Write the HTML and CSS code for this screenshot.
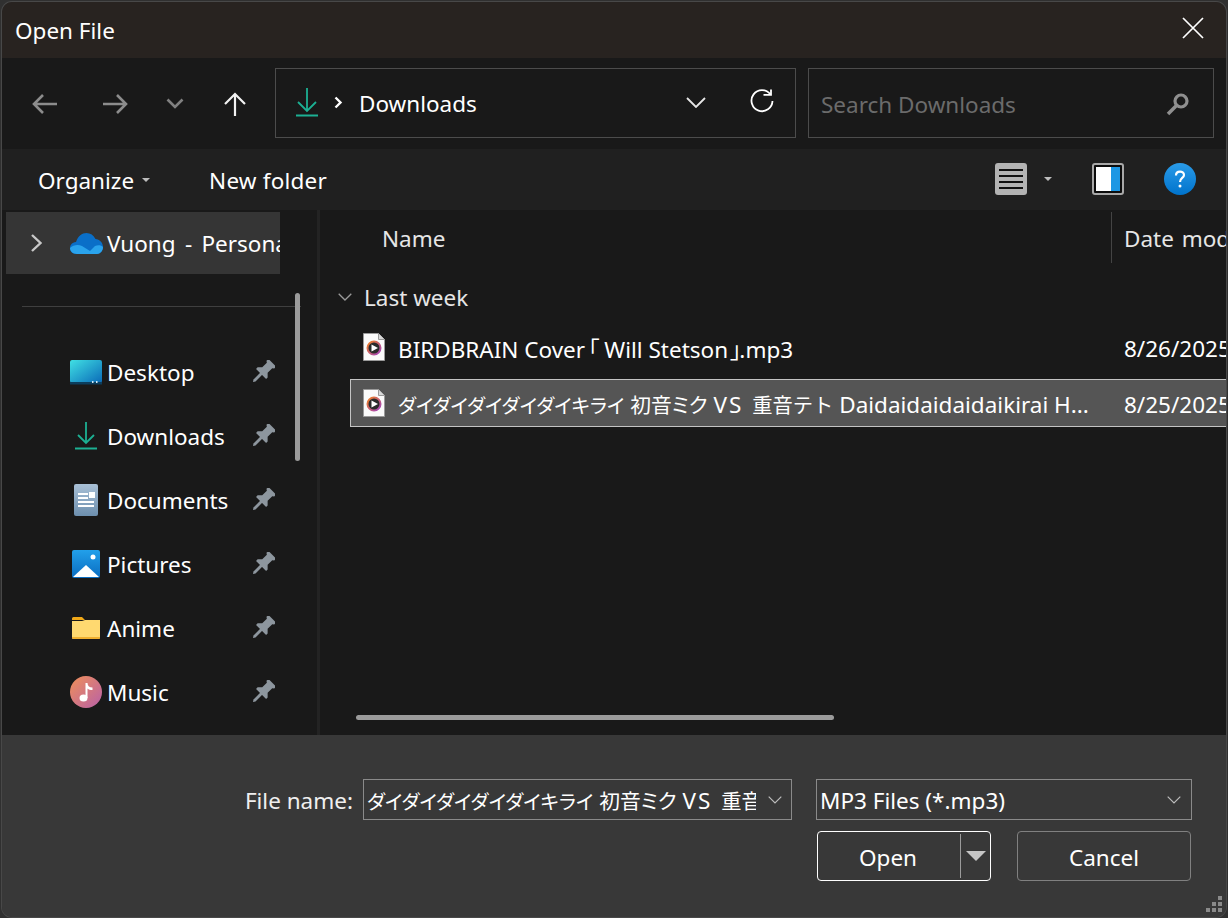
FILE: index.html
```html
<!DOCTYPE html>
<html lang="en">
  <head>
    <meta charset="UTF-8" />
    <meta name="viewport" content="width=device-width, initial-scale=1.0" />
    <title>Open File</title>
    <link rel="stylesheet" href="styles.css">
  </head>
  <body>
    <div class="dialog">
      <header class="titlebar">
        <span class="title">Open File</span>
        <svg class="close" width="22" height="22" viewBox="0 0 22 22"><path d="M1 1l20 20M21 1L1 21" stroke="#fff" stroke-width="1.700" fill="none"/></svg>
      </header>

      <nav class="navbar">
        <svg class="nav-back" width="26" height="22" viewBox="0 0 26 22"><path d="M25 11H2M11 2l-9 9 9 9" stroke="#8c8c8c" stroke-width="2.600" fill="none"/></svg>
        <svg class="nav-forward" width="26" height="22" viewBox="0 0 26 22"><path d="M1 11h23M15 2l9 9-9 9" stroke="#8c8c8c" stroke-width="2.600" fill="none"/></svg>
        <svg class="nav-recent" width="18" height="11" viewBox="0 0 18 11"><path d="M1.500 1.500l7.500 7.500 7.500-7.500" stroke="#808080" stroke-width="2.600" fill="none"/></svg>
        <svg class="nav-up" width="22" height="24" viewBox="0 0 22 24"><path d="M11 24V2M1 12L11 2l10 10" stroke="#f2f2f2" stroke-width="2.200" fill="none"/></svg>
        <div class="address">
          <svg width="24" height="29" viewBox="0 0 24 29"><path d="M12 0v23M3 14l9 9 9-9" stroke="#1cb093" stroke-width="1.800" fill="none"/><path d="M1 27.500h22" stroke="#1cb093" stroke-width="2" fill="none"/></svg>
          <svg class="crumb-arrow" width="9" height="13" viewBox="0 0 9 13"><path d="M1.500 1.500l5 5-5 5" stroke="#fff" stroke-width="2.400" fill="none"/></svg>
          <span class="crumb">Downloads</span>
          <svg class="address-drop" width="20" height="11" viewBox="0 0 20 11"><path d="M1 1l9 9 9-9" stroke="#e6e6e6" stroke-width="1.800" fill="none"/></svg>
          <svg class="refresh" width="24" height="24" viewBox="0 0 24 24"><path d="M20.500 5.500A10.500 10.500 0 1 0 22.500 12" stroke="#fff" stroke-width="1.800" fill="none"/><path d="M13.500 5.800h7.500V.5" stroke="#fff" stroke-width="1.800" fill="none"/></svg>
        </div>
        <div class="search">
          <span class="search-text">Search Downloads</span>
          <svg class="search-icon" width="24" height="24" viewBox="0 0 24 24"><circle cx="15" cy="9" r="6" stroke="#8f8f8f" stroke-width="3.200" fill="none"/><path d="M10.500 13.500L2 22" stroke="#8f8f8f" stroke-width="3.600" fill="none"/></svg>
        </div>
      </nav>

      <div class="toolbar">
        <span class="organize">Organize</span>
        <i class="caret caret-organize"></i>
        <span class="new-folder">New folder</span>
        <div class="toolbar-right">
          <svg width="32" height="32" viewBox="0 0 32 32"><rect width="32" height="32" rx="3" fill="#b3b3b3"/><path d="M4 7h24M4 13h24M4 19h24M4 25h24" stroke="#111" stroke-width="2"/></svg>
          <i class="caret caret-view"></i>
          <svg class="preview" width="32" height="32" viewBox="0 0 32 32"><rect width="32" height="32" rx="3" fill="#a8a8a8"/><rect x="2" y="2" width="28" height="28" rx="1" fill="#0c0c0c"/><rect x="4" y="4" width="15" height="24" fill="#fff"/><rect x="19" y="4" width="9" height="24" fill="#1c97e4"/></svg>
          <svg class="help" width="32" height="32" viewBox="0 0 32 32"><defs><linearGradient id="helpFill" x1="0" y1="0" x2="0" y2="1"><stop offset="0" stop-color="#2a9be8"/><stop offset="1" stop-color="#0073cc"/></linearGradient></defs><circle cx="16" cy="16" r="16" fill="url(#helpFill)"/><path d="M12 12.500c0-5 8-5 8-.5 0 3-4 3-4 7" stroke="#fff" stroke-width="2.200" fill="none"/><circle cx="16" cy="23" r="1.500" fill="#fff"/></svg>
        </div>
      </div>

      <main class="panes">
        <aside class="sidebar">
          <div class="tree-root">
            <svg class="tree-arrow" width="13" height="20" viewBox="0 0 13 20"><path d="M2 2l8.500 8L2 18" stroke="#c8c8c8" stroke-width="2.400" fill="none"/></svg>
            <svg class="onedrive" width="33" height="21" viewBox="0 0 33 21"><path d="M7 21C2 21 0 18 0 15c0-3 2-5.500 6-6C8 3 12 0 16.500 0c4 0 7 2 9 6 4 .5 7.500 3.500 7.500 8 0 4-3 7-6 7z" fill="#0a6fc8"/><path d="M7 21C3 21 0 18 0 15c3-3 8-4 12-2l8 5 5-5c3-1 6-1 8 1 0 4-3 7-6 7z" fill="#2aa3ec"/></svg>
            <span class="root-label">Vuong - Personal</span>
          </div>
          <div class="tree-sep"></div>
          <ul class="quick">
            <li class="quick-item">
              <span class="quick-icon"><svg width="32" height="25" viewBox="0 0 32 25"><defs><linearGradient id="deskFill" x1="0" y1="0" x2="1" y2="1"><stop offset="0" stop-color="#40e0e4"/><stop offset="1" stop-color="#0a6ab8"/></linearGradient></defs><rect width="32" height="23" rx="2" fill="url(#deskFill)"/><rect y="22" width="32" height="2.500" fill="#0c3d5c"/><path d="M22 21h1.500v2H22zM26 21h1.500v2H26z" fill="#cfe8f5"/></svg></span>
              <span class="quick-label">Desktop</span>
              <svg class="pin" width="24" height="24" viewBox="0 0 22 22"><g id="pinIcon" transform="rotate(45 11 11)"><path d="M6 -1h10v2.500l-1.500 1v6l3 3v2H4.500v-2l3-3v-6L6 1.500z" fill="#8d969e"/><path d="M9.700 13h2.600v9l-1.300 2-1.300-2z" fill="#8d969e"/></g></svg>
            </li>
            <li class="quick-item">
              <span class="quick-icon"><svg width="22" height="28" viewBox="0 0 22 28"><path d="M11 0v21M3 13l8 8 8-8" stroke="#1cb093" stroke-width="1.800" fill="none"/><path d="M0 26.500h22" stroke="#1cb093" stroke-width="2" fill="none"/></svg></span>
              <span class="quick-label">Downloads</span>
              <svg class="pin" width="24" height="24" viewBox="0 0 22 22"><use href="#pinIcon"/></svg>
            </li>
            <li class="quick-item">
              <span class="quick-icon"><svg width="24" height="32" viewBox="0 0 24 32"><defs><linearGradient id="docFill" x1="0" y1="0" x2="0" y2="1"><stop offset="0" stop-color="#a9c0d6"/><stop offset="1" stop-color="#6d8fae"/></linearGradient></defs><rect width="24" height="32" rx="2" fill="url(#docFill)"/><path d="M4 9h10v2H4zM4 13h10v2H4zM4 17h16v2H4zM4 21h16v2H4z" fill="#fff"/><rect x="15" y="8" width="6" height="6" fill="#fff"/></svg></span>
              <span class="quick-label">Documents</span>
              <svg class="pin" width="24" height="24" viewBox="0 0 22 22"><use href="#pinIcon"/></svg>
            </li>
            <li class="quick-item">
              <span class="quick-icon"><svg width="28" height="28" viewBox="0 0 28 28"><defs><linearGradient id="picFill" x1="0" y1="0" x2="0" y2="1"><stop offset="0" stop-color="#22a0ea"/><stop offset="1" stop-color="#0a6cc0"/></linearGradient></defs><rect width="28" height="28" rx="2" fill="url(#picFill)"/><circle cx="21" cy="7" r="2.500" fill="#fff"/><path d="M1 27l13-12 13 12z" fill="#fff"/></svg></span>
              <span class="quick-label">Pictures</span>
              <svg class="pin" width="24" height="24" viewBox="0 0 22 22"><use href="#pinIcon"/></svg>
            </li>
            <li class="quick-item">
              <span class="quick-icon"><svg width="28" height="22" viewBox="0 0 28 22"><path d="M0 1.500A1.500 1.500 0 0 1 1.500 0H10l3 3h-13z" fill="#f0a818"/><path d="M0 4h10l3-1h15v17.500a1.500 1.500 0 0 1-1.500 1.500h-25A1.500 1.500 0 0 1 0 20.500z" fill="#ffd970"/><path d="M0 20h28v.5a1.500 1.500 0 0 1-1.500 1.500h-25A1.500 1.500 0 0 1 0 20.500z" fill="#f0b030"/></svg></span>
              <span class="quick-label">Anime</span>
              <svg class="pin" width="24" height="24" viewBox="0 0 22 22"><use href="#pinIcon"/></svg>
            </li>
            <li class="quick-item">
              <span class="quick-icon"><svg width="32" height="32" viewBox="0 0 32 32"><defs><linearGradient id="musicFill" x1="0" y1="0" x2="1" y2="1"><stop offset="0" stop-color="#f09058"/><stop offset="1" stop-color="#b860a8"/></linearGradient></defs><circle cx="16" cy="16" r="16" fill="url(#musicFill)"/><ellipse cx="13.500" cy="22" rx="4" ry="3.500" fill="#fff"/><path d="M15.500 22V7h2c0 3 2 4.500 5 4.500V14c-2 0-4-.5-5-1.500V22z" fill="#fff"/></svg></span>
              <span class="quick-label">Music</span>
              <svg class="pin" width="24" height="24" viewBox="0 0 22 22"><use href="#pinIcon"/></svg>
            </li>
          </ul>
          <div class="tree-scroll"></div>
        </aside>

        <section class="files">
          <div class="file-head">
            <span class="col-name">Name</span>
            <span class="col-date">Date modified</span>
          </div>
          <div class="group">
            <svg width="14" height="8" viewBox="0 0 14 8"><path d="M.7.7L7 7 13.300.7" stroke="#9a9a9a" stroke-width="1.300" fill="none"/></svg>
            <span>Last week</span>
          </div>
          <div class="file-row">
            <svg class="file-icon" width="22" height="28" viewBox="0 0 22 28"><use href="#mp3Icon"/></svg>
            <span class="file-name">BIRDBRAIN Cover<span class="jp bracket-open">「</span>Will Stetson<span class="jp bracket-close">」</span>.mp3</span>
            <span class="file-date">8/26/2025 10:12 PM</span>
          </div>
          <div class="file-row is-selected">
            <svg class="file-icon" width="22" height="28" viewBox="0 0 22 28">
              <defs><linearGradient id="ringFill" x1="0" y1="0" x2="1" y2="1"><stop offset="0" stop-color="#f08020"/><stop offset="1" stop-color="#a040c0"/></linearGradient></defs>
              <g id="mp3Icon">
                <path d="M.5.5h15l6 6v21H.5z" fill="#fafafa" stroke="#9a9a9a"/>
                <path d="M15.500.5v6h6" fill="#d8d8d8" stroke="#9a9a9a"/>
                <circle cx="11" cy="15" r="6.500" fill="#2a2a2a" stroke="url(#ringFill)" stroke-width="2"/>
                <path d="M8.500 11.500l6.500 3.500-6.500 3.500z" fill="#fff"/>
              </g>
            </svg>
            <span class="file-name"><span class="jp jp-kana">ダイダイダイダイダイキライ</span> <span class="jp">初音ミク</span> <span class="vs">VS</span> <span class="jp-full">重音テト</span> Daidaidaidaidaikirai H...</span>
            <span class="file-date">8/25/2025 9:40 PM</span>
          </div>
          <div class="h-scroll"></div>
        </section>
      </main>

      <footer class="footer">
        <div class="name-row">
          <label class="name-label">File name:</label>
          <div class="name-box">
            <span class="name-value"><span class="jp jp-kana">ダイダイダイダイダイキライ</span> <span class="jp">初音ミク</span> <span class="vs">VS</span> <span class="jp-full">重音テト</span></span>
            <svg width="14" height="8" viewBox="0 0 14 8"><path d="M.7.7L7 7 13.300.7" stroke="#bdbdbd" stroke-width="1.200" fill="none"/></svg>
          </div>
          <div class="type-box">
            <span class="type-value">MP3 Files (*.mp3)</span>
            <svg width="14" height="8" viewBox="0 0 14 8"><path d="M.7.7L7 7 13.300.7" stroke="#bdbdbd" stroke-width="1.200" fill="none"/></svg>
          </div>
        </div>
        <div class="button-row">
          <div class="btn btn-open">
            <span class="btn-open-label">Open</span>
            <span class="btn-open-split"><i class="open-arrow"></i></span>
          </div>
          <div class="btn btn-cancel">Cancel</div>
        </div>
        <svg class="grip" width="18" height="18" viewBox="0 0 18 18"><path d="M12 0h4v4h-4zM6 6h4v4H6zM12 6h4v4h-4zM0 12h4v4H0zM6 12h4v4H6zM12 12h4v4h-4z" fill="#8a8a8a"/></svg>
      </footer>
    </div>
  </body>
</html>
```

FILE: styles.css
```css
* {
  box-sizing: border-box;
}
html,
body {
  height: 100%;
}
body {
  margin: 0;
  background: #303030;
  color: #fff;
  font-family: "Noto Sans", "Noto Sans CJK JP", sans-serif;
  font-size: 22.5px;
  overflow: hidden;
}
.jp {
  font-size: 20.8px;
  font-feature-settings: "palt";
}
.jp-kana {
  font-size: 19.700px;
}
.jp-full {
  font-size: 20.3px;
}
.vs {
  letter-spacing: 2px;
  margin-right: 3px;
}
.bracket-open,
.bracket-close {
  font-size: 22.5px;
}
.bracket-open {
  margin: 0 5px 0 3px;
}
.bracket-close {
  margin: 0 -2px 0 2px;
}
.dialog {
  width: 1224px;
  height: 915px;
  margin: 2px 0 0 2px;
  border-radius: 10px;
  box-shadow: 0 0 0 1px #484848;
  overflow: hidden;
  display: flex;
  flex-direction: column;
}

/* title bar */
.titlebar {
  height: 56px;
  flex: none;
  background: #282320;
  display: flex;
  align-items: center;
  justify-content: space-between;
  padding: 0 22px 0 13px;
}
.close {
  margin-top: -4px;
}

/* back / forward / address row */
.navbar {
  height: 91px;
  flex: none;
  background: #191919;
  display: flex;
  align-items: center;
  padding: 0 11px 0 30px;
}
.nav-forward {
  margin-left: 44px;
}
.nav-recent {
  margin-left: 38px;
}
.nav-up {
  margin-left: 40px;
}
.address,
.search {
  height: 70px;
  margin-bottom: 2px;
  border: 1px solid #4c4c4c;
  display: flex;
  align-items: center;
}
.address {
  width: 521px;
  margin-left: 29px;
  padding-left: 19px;
}
.crumb-arrow {
  margin-left: 15px;
}
.crumb {
  margin-left: 16px;
  padding-top: 2px;
}
.address-drop {
  margin-left: auto;
}
.refresh {
  margin: -4px 21px 0 44px;
}
.search {
  width: 406px;
  margin-left: 12px;
  padding: 0 23px 0 12px;
  justify-content: space-between;
}
.search-text {
  color: #6b6b6b;
  padding-top: 4px;
}
.search-icon {
  margin-top: 2px;
}

/* command bar */
.toolbar {
  height: 61px;
  flex: none;
  background: #202020;
  display: flex;
  align-items: center;
  padding: 0 0 0 36px;
}
.organize,
.new-folder {
  padding-top: 2px;
}
.caret {
  display: block;
  width: 0;
  height: 0;
  border-left: 4px solid transparent;
  border-right: 4px solid transparent;
  border-top: 4px solid #bdbdbd;
}
.caret-organize {
  margin-left: 8px;
}
.new-folder {
  margin-left: 59px;
  letter-spacing: 0.2px;
}
.toolbar-right {
  margin-left: auto;
  margin-top: -1px;
  display: flex;
  align-items: center;
  padding-right: 30px;
}
.caret-view {
  margin-left: 17px;
}
.preview {
  margin-left: 40px;
}
.help {
  margin-left: 40px;
}

/* panes */
.panes {
  height: 525px;
  flex: none;
  background: #191919;
  display: flex;
  overflow: hidden;
}
.sidebar {
  width: 318px;
  flex: none;
  position: relative;
  border-right: 3px solid #232323;
  padding: 2px 37px 0 4px;
}
.tree-root {
  height: 62px;
  background: #353535;
  display: flex;
  align-items: center;
  overflow: hidden;
  white-space: nowrap;
  padding-left: 24px;
}
.tree-arrow,
.root-label {
  flex: none;
}
.onedrive {
  flex: none;
  margin-left: 27px;
}
.root-label {
  margin-left: 4px;
  word-spacing: 3.500px;
}
.tree-sep {
  height: 1px;
  background: #3f3f3f;
  margin: 32px -21px 0 16px;
}
.quick {
  list-style: none;
  margin: 33px 0 0;
  padding: 0;
}
.quick-item {
  height: 64px;
  display: flex;
  align-items: center;
  position: relative;
}
.quick-icon {
  width: 32px;
  margin-left: 64px;
  display: flex;
  justify-content: center;
}
.quick-label {
  margin-left: 5px;
}
.pin {
  margin-left: auto;
  margin-right: 5px;
}
.tree-scroll {
  position: absolute;
  left: 293px;
  top: 83px;
  width: 5px;
  height: 168px;
  border-radius: 3px;
  background: #9b9b9b;
}
.files {
  flex: 1;
  min-width: 0;
  position: relative;
  overflow: hidden;
  padding-top: 2px;
}
.file-head {
  height: 51px;
  display: flex;
  align-items: center;
  color: #e6e6e6;
  white-space: nowrap;
}
.col-name {
  width: 730px;
  margin-left: 62px;
  flex: none;
  height: 100%;
  line-height: 53px;
  border-right: 1px solid #444;
}
.col-date {
  margin-left: 12px;
  padding-top: 2px;
  word-spacing: 2px;
}
.group {
  height: 34px;
  margin-top: 17px;
  display: flex;
  align-items: center;
  gap: 12px;
  padding-left: 18px;
  color: #e6e6e6;
}
.file-row {
  height: 48px;
  margin: 9px 0 0 30px;
  border: 1px solid transparent;
  display: flex;
  align-items: center;
  white-space: nowrap;
}
.is-selected {
  background: #555;
  border-color: #c4c4c4;
  border-right: 0;
  margin-top: 8px;
}
.file-icon {
  margin-left: 12px;
  flex: none;
}
.file-name {
  width: 726px;
  flex: none;
  margin-left: 13px;
  padding-top: 2px;
  overflow: hidden;
}
.file-date {
  padding-top: 2px;
}
.h-scroll {
  position: absolute;
  left: 36px;
  top: 505px;
  width: 478px;
  height: 5px;
  border-radius: 3px;
  background: #9b9b9b;
}

/* bottom bar */
.footer {
  flex: 1;
  background: #383838;
  position: relative;
  padding: 44px 0 0 0;
}
.name-row {
  display: flex;
  align-items: center;
}
.name-label {
  width: 351px;
  padding-top: 2px;
  text-align: right;
  color: #efefef;
}
.name-box,
.type-box {
  height: 41px;
  border: 1px solid #8a8a8a;
  display: flex;
  align-items: center;
  white-space: nowrap;
}
.name-box {
  width: 429px;
  margin-left: 10px;
  padding: 0 9px 0 3px;
}
.name-value {
  width: 389px;
  flex: none;
  padding-top: 2px;
  overflow: hidden;
  margin-right: auto;
}
.type-box {
  width: 376px;
  margin-left: 24px;
  padding: 0 10px 0 3px;
  justify-content: space-between;
}
.type-value {
  padding-top: 2px;
}
.button-row {
  display: flex;
  gap: 26px;
  margin: 11px 0 0 815px;
}
.btn {
  width: 174px;
  height: 50px;
  border-radius: 4px;
  display: flex;
  align-items: center;
  justify-content: center;
  padding-top: 2px;
}
.btn-open {
  border: 1px solid #fff;
  padding: 2px 0;
}
.btn-open-label {
  flex: 1;
  padding: 2px 2px 0 0;
  text-align: center;
}
.btn-open-split {
  width: 30px;
  height: 100%;
  border-left: 1px solid #9b9b9b;
  display: flex;
  align-items: center;
  justify-content: center;
}
.open-arrow {
  display: block;
  width: 0;
  height: 0;
  border-left: 10px solid transparent;
  border-right: 10px solid transparent;
  border-top: 10px solid #c6c6c6;
}
.btn-cancel {
  border: 1px solid #808080;
}
.grip {
  position: absolute;
  right: 2px;
  bottom: 3px;
}
```
